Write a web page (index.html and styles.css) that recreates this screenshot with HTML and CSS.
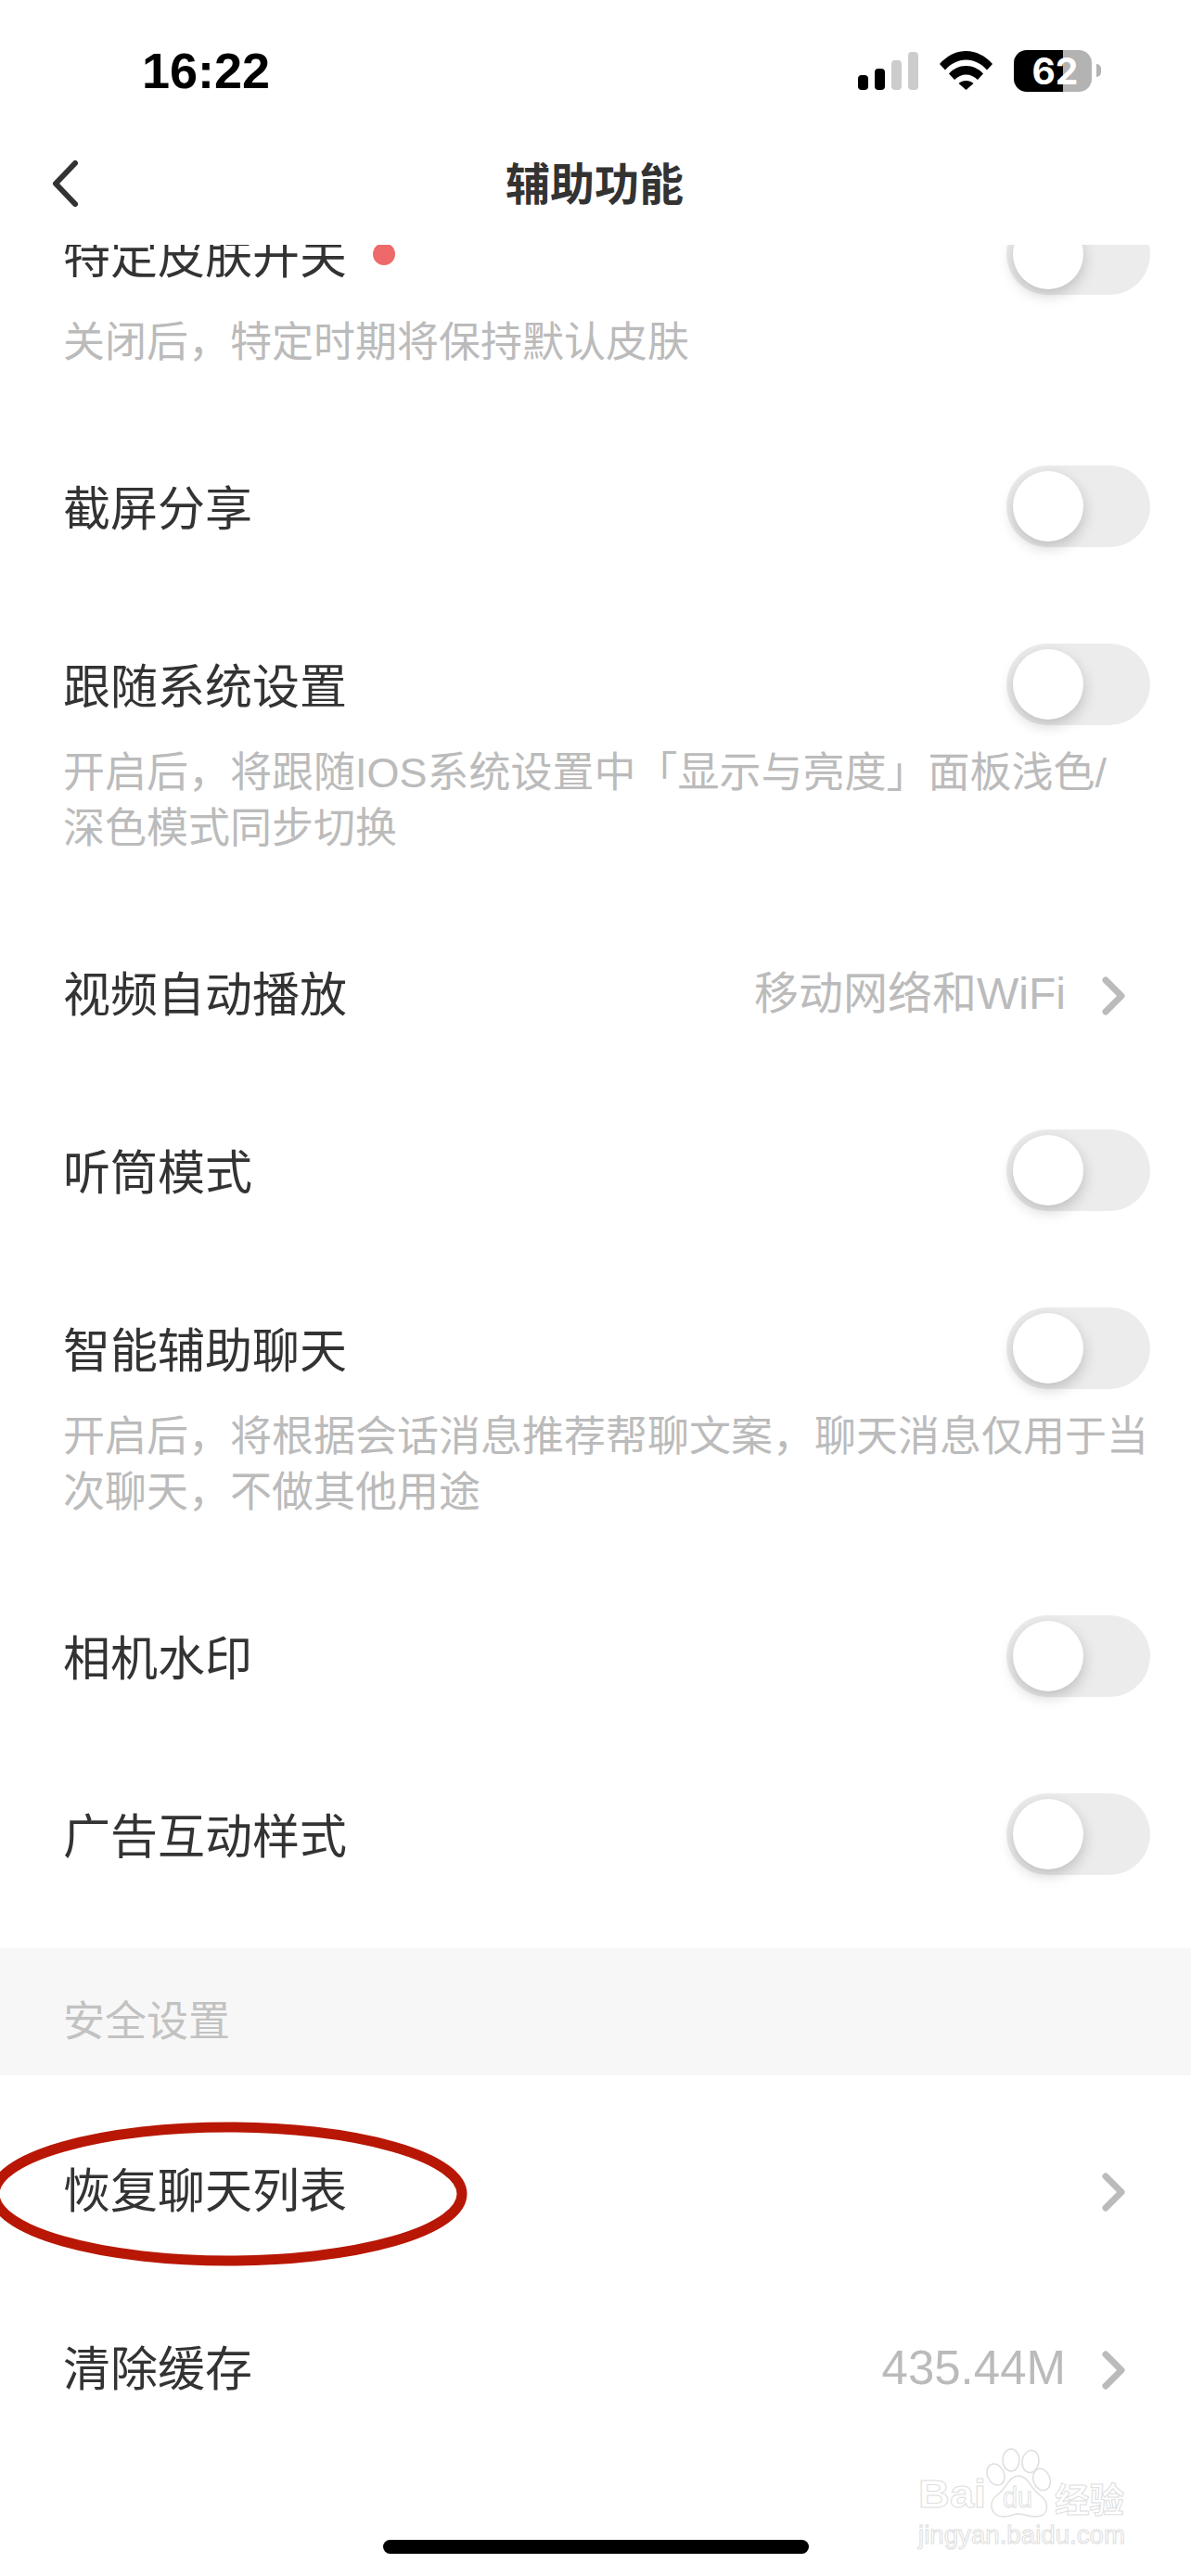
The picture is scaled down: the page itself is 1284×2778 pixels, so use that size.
FILE: index.html
```html
<!DOCTYPE html>
<html lang="zh-CN">
<head>
<meta charset="utf-8">
<title>辅助功能</title>
<link rel="stylesheet" href="styles.css">
</head>
<body>
<div class="app">
  <header class="top">
    <div class="status">
      <span class="time">16:22</span>
      <div class="status-icons">
        <svg class="signal" width="65" height="41" viewBox="0 0 65 41"><rect x="0" y="25" width="11" height="16" rx="4" fill="#000"/><rect x="18" y="18" width="11" height="23" rx="4" fill="#000"/><rect x="36" y="9" width="11" height="32" rx="4" fill="#ccc"/><rect x="54" y="0" width="11" height="41" rx="4" fill="#ccc"/></svg>
        <svg class="wifi" width="57" height="42" viewBox="0 0 57 42"><path d="M0 14C8 5 18 0 28.500 0C39 0 49 5 57 14L51 20.500C45 13.500 37 9.500 28.500 9.500C20 9.500 12 13.500 6 20.500Z"/><path d="M10 24.500C15 19 21 16 28.500 16C36 16 42 19 47 24.500L41 31C37.500 27.500 33 25.500 28.500 25.500C24 25.500 19.500 27.500 16 31Z"/><path d="M20.500 35C22.500 33 25.500 32 28.500 32C31.500 32 34.500 33 36.500 35L28.500 42Z"/></svg>
        <div class="battery"><span class="battery-level">62</span></div>
        <span class="battery-nub"></span>
      </div>
    </div>
    <nav class="nav">
      <svg class="back" width="28" height="52" viewBox="0 0 28 52"><path d="M25 4L4 26L25 48" fill="none" stroke="#333" stroke-width="6" stroke-linecap="round" stroke-linejoin="round"/></svg>
      <h1 class="nav-title">辅助功能</h1>
    </nav>
  </header>

  <main class="content">
    <section class="group group-first">
      <div class="row">
        <div class="row-head">
          <div class="row-title">特定皮肤开关<span class="dot"></span></div>
          <div class="toggle"><span class="knob"></span></div>
        </div>
        <p class="row-desc">关闭后，特定时期将保持默认皮肤</p>
      </div>
      <div class="row">
        <div class="row-head">
          <div class="row-title">截屏分享</div>
          <div class="toggle"><span class="knob"></span></div>
        </div>
      </div>
      <div class="row">
        <div class="row-head">
          <div class="row-title">跟随系统设置</div>
          <div class="toggle"><span class="knob"></span></div>
        </div>
        <p class="row-desc">开启后，将跟随IOS系统设置中「显示与亮度」面板浅色/<br>深色模式同步切换</p>
      </div>
      <div class="row">
        <div class="row-head">
          <div class="row-title">视频自动播放</div>
          <div class="row-link"><span class="row-value">移动网络和WiFi</span>
            <svg class="chev" width="25" height="42" viewBox="0 0 25 42"><path d="M4 4L21 21L4 38" fill="none" stroke="#bbb" stroke-width="7" stroke-linecap="round" stroke-linejoin="round"/></svg></div>
        </div>
      </div>
      <div class="row">
        <div class="row-head">
          <div class="row-title">听筒模式</div>
          <div class="toggle"><span class="knob"></span></div>
        </div>
      </div>
      <div class="row">
        <div class="row-head">
          <div class="row-title">智能辅助聊天</div>
          <div class="toggle"><span class="knob"></span></div>
        </div>
        <p class="row-desc">开启后，将根据会话消息推荐帮聊文案，聊天消息仅用于当次聊天，不做其他用途</p>
      </div>
      <div class="row">
        <div class="row-head">
          <div class="row-title">相机水印</div>
          <div class="toggle"><span class="knob"></span></div>
        </div>
      </div>
      <div class="row">
        <div class="row-head">
          <div class="row-title">广告互动样式</div>
          <div class="toggle"><span class="knob"></span></div>
        </div>
      </div>
    </section>

    <h2 class="section-label">安全设置</h2>

    <section class="group group-last">
      <div class="row row-circled">
        <div class="row-head">
          <div class="row-title">恢复聊天列表</div>
          <div class="row-link">
            <svg class="chev" width="25" height="42" viewBox="0 0 25 42"><path d="M4 4L21 21L4 38" fill="none" stroke="#bbb" stroke-width="7" stroke-linecap="round" stroke-linejoin="round"/></svg></div>
        </div>
        <svg class="circle" width="520" height="170" viewBox="0 0 520 170"><ellipse cx="256" cy="85" rx="252" ry="72" fill="none" stroke="#b81705" stroke-width="11"/></svg>
      </div>
      <div class="row">
        <div class="row-head">
          <div class="row-title">清除缓存</div>
          <div class="row-link"><span class="row-value row-value-num">435.44M</span>
            <svg class="chev" width="25" height="42" viewBox="0 0 25 42"><path d="M4 4L21 21L4 38" fill="none" stroke="#bbb" stroke-width="7" stroke-linecap="round" stroke-linejoin="round"/></svg></div>
        </div>
      </div>
    </section>
  </main>

  <svg class="watermark" width="260" height="130" viewBox="0 0 260 130">
    <g class="wm-shape">
      <ellipse cx="120" cy="23" rx="9" ry="12"/>
      <ellipse cx="141" cy="24.500" rx="9" ry="12" transform="rotate(10 141 24.500)"/>
      <ellipse cx="103.500" cy="38.500" rx="9" ry="12" transform="rotate(-25 103.500 38.500)"/>
      <ellipse cx="153" cy="44" rx="9" ry="12" transform="rotate(-20 153 44)"/>
      <path d="M128 40C118 40 116 52 106 60C94 68 98 84 112 84C120 84 122 81 128 81C134 81 138 84 146 84C162 84 162 68 150 60C140 52 138 40 128 40Z"/>
    </g>
    <text class="wm-text wm-bai" x="20" y="74" textLength="73" lengthAdjust="spacingAndGlyphs">Bai</text>
    <text class="wm-text wm-du" x="111" y="74" textLength="32" lengthAdjust="spacingAndGlyphs">du</text>
    <text class="wm-text wm-jy" x="167" y="80" textLength="75" lengthAdjust="spacingAndGlyphs">经验</text>
    <text class="wm-text wm-url" x="20" y="113" textLength="223" lengthAdjust="spacingAndGlyphs">jingyan.baidu.com</text>
  </svg>

  <div class="home-bar"></div>
</div>
</body>
</html>
```

FILE: styles.css
```css
* { box-sizing: border-box; }

html, body {
  margin: 0;
  padding: 0;
  background: #fff;
}

.app {
  position: relative;
  display: flex;
  flex-direction: column;
  width: 1284px;
  height: 2778px;
  overflow: hidden;
  background: #fff;
  color: #333;
  font-family: "Liberation Sans", "Noto Sans CJK SC", sans-serif;
}

/* Header */
.top {
  flex: none;
  height: 264px;
  background: #fff;
  position: relative;
  z-index: 2;
}

.status {
  display: flex;
  justify-content: space-between;
  align-items: center;
  height: 132px;
  padding: 20px 97px 0 153px;
  color: #000;
}

.time {
  font-size: 54px;
  line-height: 60px;
  font-weight: 700;
}

.status-icons {
  display: flex;
  align-items: center;
}

.signal { margin-top: 1px; }
.wifi { margin-left: 23px; }
.wifi path { fill: #000; }

.battery {
  width: 84px;
  height: 45px;
  margin-left: 23px;
  border-radius: 14px;
  background: linear-gradient(90deg, #000 0, #000 53px, #b3b3b3 53px, #b3b3b3 100%);
  color: #fff;
  font-family: Inter, "Liberation Sans", sans-serif;
  font-size: 39px;
  font-weight: 700;
  line-height: 45px;
  text-align: center;
  padding-left: 5px;
}

.battery-nub {
  width: 5px;
  height: 14px;
  margin-left: 5px;
  border-radius: 0 7px 7px 0;
  background: #b3b3b3;
}

.nav {
  position: relative;
  display: flex;
  align-items: center;
  justify-content: center;
  height: 132px;
}

.back {
  position: absolute;
  left: 56px;
  top: 40px;
}

.nav-title {
  margin: 4px 2px 0 0;
  font-size: 48px;
  line-height: 64px;
  font-weight: 700;
  color: #333;
}

/* Content */
.content {
  flex: 1;
  min-height: 0;
}

.group-first { margin-top: -86px; }
.group-last { padding-top: 26px; }

.row {
  padding: 52px 44px 52px 69px;
}

.row-circled { position: relative; }

.row-head {
  display: flex;
  align-items: center;
  justify-content: space-between;
  height: 88px;
}

.row-title {
  display: flex;
  align-items: center;
  margin: 7px 0 0 -1px;
  font-size: 51px;
  line-height: 70px;
  color: #333;
}

.dot {
  width: 24px;
  height: 24px;
  margin: 0 0 7px 28px;
  border-radius: 50%;
  background: #ee6a6a;
}

.row-desc {
  margin: 22px 0 -2px -1px;
  font-size: 45px;
  line-height: 60px;
  color: #bbb;
}

.toggle {
  display: flex;
  align-items: center;
  width: 155px;
  height: 88px;
  padding-left: 7px;
  border-radius: 44px;
  background: #ececec;
}

.knob {
  width: 76px;
  height: 76px;
  border-radius: 50%;
  background: #fff;
  box-shadow: 0 6px 16px rgba(0, 0, 0, 0.2);
}

.row-link {
  display: flex;
  align-items: center;
  margin-top: 7px;
  padding-right: 27px;
}

.row-value {
  margin: 0 39px 3px 0;
  font-size: 48px;
  line-height: 64px;
  color: #bbb;
}

.row-value-num { font-size: 51px; }

.section-label {
  margin: 27px 0 0;
  height: 137px;
  padding: 50px 68px 0;
  background: #f7f7f7;
  font-size: 45px;
  line-height: 60px;
  font-weight: 400;
  color: #c2c2c2;
}

.circle {
  position: absolute;
  left: -10px;
  top: 17px;
}

/* Overlays */
.watermark {
  position: absolute;
  left: 970px;
  top: 2630px;
}

.wm-shape {
  fill: #fff;
  stroke: #dedede;
  stroke-width: 1.5;
}

.wm-text {
  fill: #fff;
  stroke: #dedede;
  stroke-width: 1;
  font-family: "Liberation Sans", "Noto Sans CJK SC", sans-serif;
  font-weight: 700;
}

.wm-bai { font-size: 42px; }
.wm-du { font-size: 32px; font-weight: 400; }
.wm-jy { font-size: 37px; }
.wm-url { font-size: 27px; font-weight: 400; }

.home-bar {
  position: absolute;
  left: 413px;
  top: 2739px;
  width: 459px;
  height: 15px;
  border-radius: 8px;
  background: #000;
}
```
